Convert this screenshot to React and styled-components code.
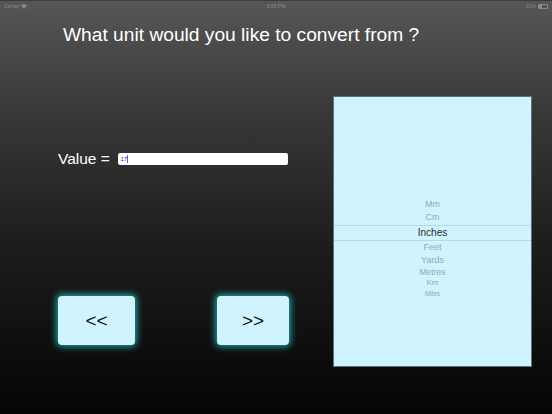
import React from "react";
import styled, { createGlobalStyle } from "styled-components";

const units = [
  { name: "Mm", size: 9, lh: 13 },
  { name: "Cm", size: 9, lh: 13.5 },
  { name: "Inches", size: 10, lh: 14, selected: true },
  { name: "Feet", size: 9, lh: 13.5 },
  { name: "Yards", size: 9, lh: 12.5 },
  { name: "Metres", size: 8.5, lh: 11.5 },
  { name: "Km", size: 8, lh: 10.5 },
  { name: "Miles", size: 6.5, lh: 9 },
];

const Global = createGlobalStyle`
  html, body {
    margin: 0;
    padding: 0;
    background: #050505;
  }
  body {
    font-family: "Liberation Sans", Arial, sans-serif;
  }
`;

const Screen = styled.div`
  width: 552px;
  height: 414px;
  overflow: hidden;
  background: linear-gradient(to bottom, #575757 0%, #3a3a3a 25%, #1c1c1c 60%, #050505 100%);
  display: flex;
  flex-direction: column;
  color: #fff;
`;

const StatusBar = styled.div`
  height: 10px;
  display: flex;
  align-items: center;
  justify-content: space-between;
  padding: 0 4px;
  font-size: 5px;
  color: #8a8a8a;
  border-top: 1px solid #3c3c3c;
`;

const Side = styled.div`
  width: 60px;
  display: flex;
  align-items: center;
  gap: 2px;
  justify-content: ${(p) => (p.right ? "flex-end" : "flex-start")};
`;

const Battery = styled.span`
  width: 8px;
  height: 3px;
  border: 1px solid #8a8a8a;
  border-radius: 1px;
  display: inline-block;
  position: relative;
  &::before {
    content: "";
    position: absolute;
    left: 0;
    top: 0;
    bottom: 0;
    width: 3px;
    background: #8a8a8a;
  }
`;

const Title = styled.h1`
  margin: 12px 0 0 63px;
  font-size: 19.2px;
  font-weight: normal;
  line-height: 24px;
  color: #fff;
`;

const Body = styled.div`
  display: flex;
  margin-top: 49px;
`;

const LeftCol = styled.div`
  width: 333px;
  display: flex;
  flex-direction: column;
`;

const ValueRow = styled.div`
  display: flex;
  align-items: center;
  margin: 54px 0 0 58px;
  gap: 8px;
`;

const Label = styled.span`
  font-size: 15.5px;
  color: #fff;
`;

const Field = styled.div`
  width: 170px;
  height: 12px;
  background: #fff;
  border-radius: 2px;
  display: flex;
  align-items: center;
  padding-left: 3px;
  box-sizing: border-box;
  font-size: 5.5px;
  color: #222;
`;

const Caret = styled.span`
  width: 1px;
  height: 8px;
  background: #3b6cf5;
  margin-left: 0.5px;
`;

const ButtonRow = styled.div`
  display: flex;
  margin: 128px 0 0 58px;
  gap: 82px;
`;

const NavButton = styled.button`
  width: ${(p) => p.w}px;
  height: 49px;
  border: none;
  border-radius: 4px;
  background: #d0f4ff;
  box-shadow: 0 0 6px 2px rgba(40, 200, 200, 0.75);
  font-family: "Liberation Sans", Arial, sans-serif;
  font-size: 19px;
  color: #111;
  padding: 0;
  cursor: pointer;
`;

const Picker = styled.div`
  width: 199px;
  height: 271px;
  box-sizing: border-box;
  background: #cff3ff;
  border: 1px solid #5e7078;
  display: flex;
  flex-direction: column;
  align-items: center;
  padding-top: 101px;
`;

const Item = styled.div`
  width: 100%;
  text-align: center;
  font-size: ${(p) => p.size}px;
  line-height: ${(p) => p.lh}px;
  color: ${(p) => (p.selected ? "#2a2a2a" : "#95a9b0")};
  border-top: ${(p) => (p.selected ? "1px solid #b6dbe6" : "none")};
  border-bottom: ${(p) => (p.selected ? "1px solid #b6dbe6" : "none")};
`;

export default function App() {
  return (
    <>
      <Global />
      <Screen>
        <StatusBar>
          <Side>
            <span>Carrier</span>
            <svg width="6" height="5" viewBox="0 0 12 10">
              <path d="M6 10 L0 3 A9 9 0 0 1 12 3 Z" fill="#8a8a8a" />
            </svg>
          </Side>
          <span>8:55 PM</span>
          <Side right>
            <span>31%</span>
            <Battery />
          </Side>
        </StatusBar>
        <Title>What unit would you like to convert from ?</Title>
        <Body>
          <LeftCol>
            <ValueRow>
              <Label>Value =</Label>
              <Field>
                17
                <Caret />
              </Field>
            </ValueRow>
            <ButtonRow>
              <NavButton w={77}>&lt;&lt;</NavButton>
              <NavButton w={72}>&gt;&gt;</NavButton>
            </ButtonRow>
          </LeftCol>
          <Picker>
            {units.map((u) => (
              <Item key={u.name} size={u.size} lh={u.lh} selected={u.selected}>
                {u.name}
              </Item>
            ))}
          </Picker>
        </Body>
      </Screen>
    </>
  );
}
